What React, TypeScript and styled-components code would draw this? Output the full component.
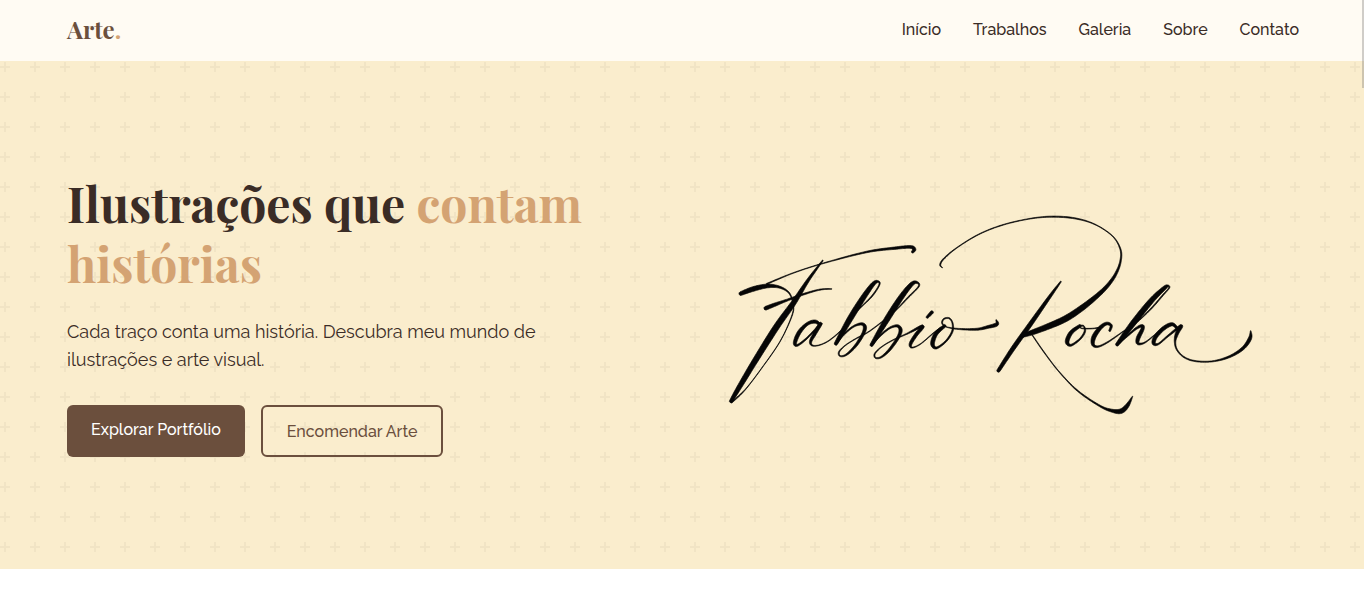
import React from "react";
import styled, { createGlobalStyle } from "styled-components";

const color = {
  paper: "#fffbf3",
  sand: "#faedcd",
  brown: "#6b4f3d",
  accent: "#d4a373",
  ink: "#3a2c26",
};

const serif = `"Playfair Display", "Liberation Serif", serif`;
const sans = `Raleway, "Open Sans", sans-serif`;

const plusTile = `url("data:image/svg+xml,%3Csvg xmlns='http://www.w3.org/2000/svg' width='30' height='30'%3E%3Cpath fill='%236b4f3d' fill-opacity='.06' d='M4 0h2v4h4v2H6v4H4V6H0V4h4z'/%3E%3C/svg%3E")`;

const GlobalStyle = createGlobalStyle`
  *, *::before, *::after { box-sizing: border-box; }
  body { margin: 0; background: #fff; color: ${color.ink}; font-family: ${sans}; }
  h1, p, ul { margin: 0; padding: 0; }
  a { text-decoration: none; color: inherit; }
`;

const Page = styled.div`
  position: relative;
`;

const Header = styled.header`
  display: flex;
  align-items: center;
  justify-content: space-between;
  padding: 0 65px 2px 67px;
  min-height: 61px;
  background: ${color.paper};
`;

const Logo = styled.a`
  padding-bottom: 2px;
  font: 700 24px/32px ${serif};
  color: ${color.brown};
`;

const Accent = styled.span`
  color: ${color.accent};
`;

const NavList = styled.ul`
  display: flex;
  gap: 32px;
  list-style: none;
`;

const NavLink = styled.a`
  font-size: 16px;
  font-weight: 500;
  line-height: 24px;
`;

const Hero = styled.section`
  display: grid;
  grid-template-columns: 1fr 1fr;
  gap: 48px;
  align-items: center;
  padding: 112px 65px 112px 67px;
  background: ${color.sand} ${plusTile} 0 1px;
`;

const Title = styled.h1`
  font: 700 48px/60px ${serif};
`;

const Lead = styled.p`
  margin-top: 25px;
  max-width: 540px;
  font-size: 18px;
  line-height: 28px;
`;

const Actions = styled.div`
  display: flex;
  gap: 16px;
  margin-top: 31px;
`;

const Button = styled.a<{ $outline?: boolean }>`
  padding: 13px 24px 11px;
  border-radius: 6px;
  font-size: 16px;
  font-weight: 500;
  line-height: 24px;
  white-space: nowrap;
  color: ${(p) => (p.$outline ? color.brown : "#fff")};
  background: ${(p) => (p.$outline ? "transparent" : color.brown)};
  border: ${(p) => (p.$outline ? `2px solid ${color.brown}` : "0")};
`;

const Signature = styled.svg`
  display: block;
  width: 100%;
  height: auto;
`;

const ScrollThumb = styled.div`
  position: absolute;
  top: 0;
  right: 0;
  width: 2px;
  height: 88px;
  background: rgba(120, 120, 120, 0.35);
`;

/* A brush stroke is a list of [x, y, thickness] stations. */
type Station = [number, number, number];

const strokes: Station[][] = [
  [[578,156,8],[583,148,10],[572,141,9],[530,144,8],[440,156,6],[310,190,4],[220,219,4],[140,252,5]],
  [[62,281,11],[100,267,13],[143,258,11],[180,262,7],[208,280,5],[220,315,4],[215,350,4],[180,425,3],[125,505,3],[75,570,4],[35,607,6]],
  [[33,604,10],[60,558,13],[110,475,15],[170,380,16],[220,310,14],[265,240,9],[308,182,5]],
  [[137,325,11],[165,314,10],[200,301,7],[250,283,6],[300,269,5],[335,267,4]],
  [[300,374,8],[285,365,10],[262,372,9],[238,397,11],[225,428,10],[232,436,7],[255,420,6],[285,390,6],[303,370,9],[285,400,10],[272,425,8],[278,437,5],[300,435,4],[330,420,4],[370,385,4],[410,335,4],[455,290,5],[478,255,5],[474,245,7],[460,252,11],[430,293,14],[390,357,15],[348,431,10]],
  [[348,432,6],[370,405,6],[400,380,6],[425,372,8],[435,382,10],[428,405,9],[405,440,8],[378,465,6],[360,468,5],[358,455,5],[378,435,4],[410,415,4],[450,393,4],[520,338,4],[565,292,5],[596,260,5],[592,248,7],[576,252,11],[545,290,14],[503,355,15],[455,435,10]],
  [[455,436,6],[478,410,6],[508,385,6],[532,378,8],[542,390,10],[535,412,9],[510,448,8],[485,471,6],[467,474,5],[465,461,5],[485,441,4],[520,420,4],[560,402,5],[608,379,9],[588,405,10],[572,432,9],[577,443,5],[602,432,4],[640,400,4],[662,383,4]],
  [[622,352,8],[636,337,10]],
  [[674,378,9],[648,402,11],[638,432,11],[650,444,7],[678,424,6],[697,395,6],[698,370,5],[688,355,5],[672,357,5],[667,370,5],[680,381,4],[715,387,5],[770,388,7],[805,381,9],[831,373,10],[829,360,4]],
  [[1023,245,5],[990,290,9],[930,375,12],[880,445,12],[836,512,10]],
  [[907,407,11],[950,393,14],[1030,360,16],[1085,325,15],[1135,285,12],[1165,255,10],[1188,222,8],[1202,185,6],[1202,148,5],[1178,108,4],[1125,73,4],[1065,55,5],[995,50,5],[925,57,4],[845,76,4],[775,104,4],[710,144,4],[672,176,5],[661,194,5],[667,203,4]],
  [[937,405,4],[975,460,4],[1020,518,4],[1075,574,5],[1140,618,6],[1175,632,9],[1203,634,13],[1222,618,11],[1238,590,4]],
  [[1080,378,9],[1054,398,11],[1042,425,11],[1053,436,7],[1080,418,6],[1095,395,6],[1092,379,5],[1083,378,5],[1085,385,4],[1115,386,4],[1145,382,4]],
  [[1170,392,7],[1174,377,8],[1160,371,9],[1140,385,11],[1122,412,12],[1120,434,9],[1135,440,6],[1165,426,5],[1210,395,4],[1250,368,4],[1295,325,5],[1330,285,5],[1348,264,5],[1344,258,7],[1333,265,11],[1295,302,14],[1240,370,15],[1192,434,10]],
  [[1192,435,6],[1220,410,6],[1250,385,7],[1267,378,9],[1268,388,10],[1255,415,11],[1255,431,8],[1275,428,5],[1305,405,4],[1330,385,4]],
  [[1370,382,8],[1356,373,10],[1332,385,11],[1308,410,11],[1302,430,10],[1316,432,6],[1345,408,6],[1384,378,9],[1372,400,10],[1366,425,6],[1372,450,5],[1395,473,5],[1430,484,5],[1480,484,5],[1530,470,7],[1570,445,9],[1591,415,10],[1593,393,4]],
];

const spline = (a: number, b: number, c: number, d: number, t: number) =>
  0.5 * (2 * b + (c - a) * t + (2 * a - 5 * b + 4 * c - d) * t * t + (3 * b - a - 3 * c + d) * t * t * t);

/* Turns the stations into the outline of a round-ended stroke whose thickness follows them. */
function brushOutline(stations: Station[]): string {
  const at = (i: number) => stations[Math.max(0, Math.min(stations.length - 1, i))];
  const samples: Station[] = [];
  for (let i = 0; i < stations.length - 1; i++) {
    for (let s = 0; s < 10; s++) {
      const t = s / 10;
      const v = [0, 1, 2].map((k) => spline(at(i - 1)[k], at(i)[k], at(i + 1)[k], at(i + 2)[k], t));
      samples.push([v[0], v[1], v[2]]);
    }
  }
  samples.push(at(stations.length - 1));
  const left: string[] = [];
  const right: string[] = [];
  const radii: number[] = [];
  samples.forEach(([x, y, w], i) => {
    const p = samples[Math.max(0, i - 1)];
    const n = samples[Math.min(samples.length - 1, i + 1)];
    const dx = n[0] - p[0];
    const dy = n[1] - p[1];
    const len = Math.hypot(dx, dy) || 1;
    const r = Math.max(0.6, w * 0.66 - 1.7);
    const ox = (-dy / len) * r;
    const oy = (dx / len) * r;
    radii.push(r);
    left.push(`${(x + ox).toFixed(1)} ${(y + oy).toFixed(1)}`);
    right.unshift(`${(x - ox).toFixed(1)} ${(y - oy).toFixed(1)}`);
  });
  const cap = (r: number) => `A${r.toFixed(1)} ${r.toFixed(1)} 0 0 0 `;
  return `M${left.join("L")}${cap(radii[radii.length - 1])}${right.join("L")}${cap(radii[0])}${left[0]}Z`;
}

const links = [
  ["Início", "#inicio"],
  ["Trabalhos", "#trabalhos"],
  ["Galeria", "#galeria"],
  ["Sobre", "#sobre"],
  ["Contato", "#contato"],
];

export default function App() {
  return (
    <Page>
      <GlobalStyle />
      <Header>
        <Logo href="#inicio">
          Arte<Accent>.</Accent>
        </Logo>
        <nav>
          <NavList>
            {links.map(([label, href]) => (
              <li key={href}>
                <NavLink href={href}>{label}</NavLink>
              </li>
            ))}
          </NavList>
        </nav>
      </Header>
      <main>
        <Hero id="inicio">
          <div>
            <Title>
              Ilustrações que <Accent>contam histórias</Accent>
            </Title>
            <Lead>Cada traço conta uma história. Descubra meu mundo de ilustrações e arte visual.</Lead>
            <Actions>
              <Button href="#trabalhos">Explorar Portfólio</Button>
              <Button href="#contato" $outline>
                Encomendar Arte
              </Button>
            </Actions>
          </div>
          <Signature viewBox="-39 45 1777 600" role="img" aria-label="Fabbio Rocha">
            <g fill="#060606" stroke="#060606" strokeWidth="2" strokeLinejoin="round">
              {strokes.map((s, i) => (
                <path key={i} d={brushOutline(s)} />
              ))}
            </g>
          </Signature>
        </Hero>
      </main>
      <ScrollThumb />
    </Page>
  );
}
